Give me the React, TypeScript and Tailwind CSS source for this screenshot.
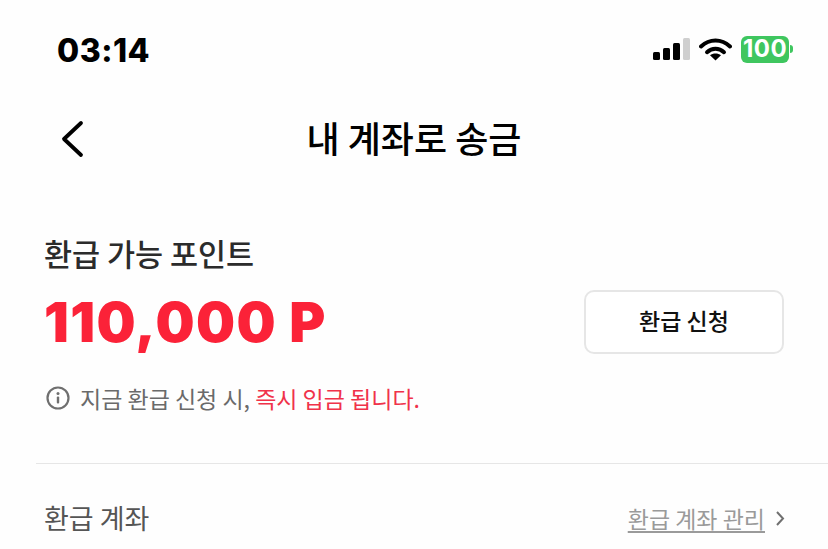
const KR = "font-['Noto_Sans_CJK_KR','Noto_Sans',sans-serif]";

const StatusBar = () => (
  <div className="flex h-[100px] items-center justify-between pb-[2px] pl-[57px] pr-[35px]">
    <span className="mt-[3px] font-['Inter',sans-serif] text-[32px] font-extrabold leading-none tracking-[0.5px] text-black">
      03:14
    </span>
    <div className="flex items-center">
      {/* signal */}
      <div className="flex items-end gap-[3px]">
        <div className="h-[8px] w-[7px] rounded-[1.5px] bg-black" />
        <div className="h-[12px] w-[7px] rounded-[1.5px] bg-black" />
        <div className="h-[17px] w-[7px] rounded-[1.5px] bg-black" />
        <div className="h-[22px] w-[7px] rounded-[1.5px] bg-[#cfcfcf]" />
      </div>
      {/* wifi */}
      <svg className="ml-[9px]" width="33" height="24" viewBox="0 0 33 24" fill="none">
        <path d="M2 9.5C10.5 1.5 22.5 1.5 31 9.5" stroke="#000" strokeWidth="4" strokeLinecap="round" />
        <path d="M8 15.2C13 10.6 20 10.6 25 15.2" stroke="#000" strokeWidth="4" strokeLinecap="round" />
        <path d="M16.5 23.5L11 18.3C14 15.8 19 15.8 22 18.3Z" fill="#000" />
      </svg>
      {/* battery */}
      <div className="ml-[9px] flex items-center">
        <div className="flex h-[27px] w-[48px] items-center justify-center rounded-[6px] bg-[#3fc65f] font-['Inter',sans-serif] text-[24px] font-bold leading-none tracking-[0.5px] text-white">
          100
        </div>
        <div className="ml-[1px] h-[8px] w-[3px] rounded-r-[3px] bg-[#3fc65f]" />
      </div>
    </div>
  </div>
);

const Header = () => (
  <div className="relative flex h-[76px] items-center justify-center">
    <svg className="absolute left-[59px] top-[19px]" width="28" height="40" viewBox="0 0 28 40" fill="none">
      <path d="M22 4L5 20L22 36" stroke="#000" strokeWidth="3.8" strokeLinecap="round" strokeLinejoin="round" />
    </svg>
    <h1 className="pb-[3px] text-[36px] font-medium leading-none text-black">내 계좌로 송금</h1>
  </div>
);

export default function App() {
  return (
    <div className={`h-[549px] w-[828px] overflow-hidden bg-[#fefefe] ${KR}`}>
      <StatusBar />
      <Header />
      <div className="pl-[44px] pr-[44px] pt-[50px]">
        <p className="text-[30.5px] font-medium leading-[54px] text-[#2b2b2b]">환급 가능 포인트</p>
        <div className="mt-[10px] flex items-center justify-between">
          <span className="font-['Inter',sans-serif] text-[55px] font-black leading-[64px] tracking-[1.4px] text-[#fb2238]">
            110,000 P
          </span>
          <button className="flex h-[64px] w-[200px] items-center justify-center rounded-[10px] border-2 border-[#e6e6e6] bg-white pb-[3px] text-[23px] font-medium text-[#111]">
            환급 신청
          </button>
        </div>
        <div className="mt-[26px] flex items-center">
          <svg className="ml-[2px]" width="24" height="24" viewBox="0 0 24 24" fill="none">
            <circle cx="12" cy="12" r="10.5" stroke="#6f6f6f" strokeWidth="2.2" />
            <circle cx="12" cy="7.5" r="1.5" fill="#6f6f6f" />
            <rect x="10.8" y="10.5" width="2.4" height="7" rx="1" fill="#6f6f6f" />
          </svg>
          <p className="ml-[10px] text-[23px] leading-[36px] text-[#6a6a6a]">
            지금 환급 신청 시, <span className="text-[#f0324a]">즉시 입금 됩니다.</span>
          </p>
        </div>
      </div>
      <div className="ml-[36px] mt-[47px] h-px bg-[#e6e6e6]" />
      <div className="flex items-center justify-between pl-[44px] pr-[43px] pt-[32px]">
        <span className="text-[27px] leading-[44px] text-[#555]">환급 계좌</span>
        <div className="flex items-center gap-[10px]">
          <a className="text-[23px] leading-[36px] text-[#9a9a9a] underline underline-offset-[3px]">환급 계좌 관리</a>
          <svg width="10" height="16" viewBox="0 0 10 16" fill="none">
            <path d="M2 2L8 8.5L2 15" stroke="#707070" strokeWidth="2" />
          </svg>
        </div>
      </div>
    </div>
  );
}
